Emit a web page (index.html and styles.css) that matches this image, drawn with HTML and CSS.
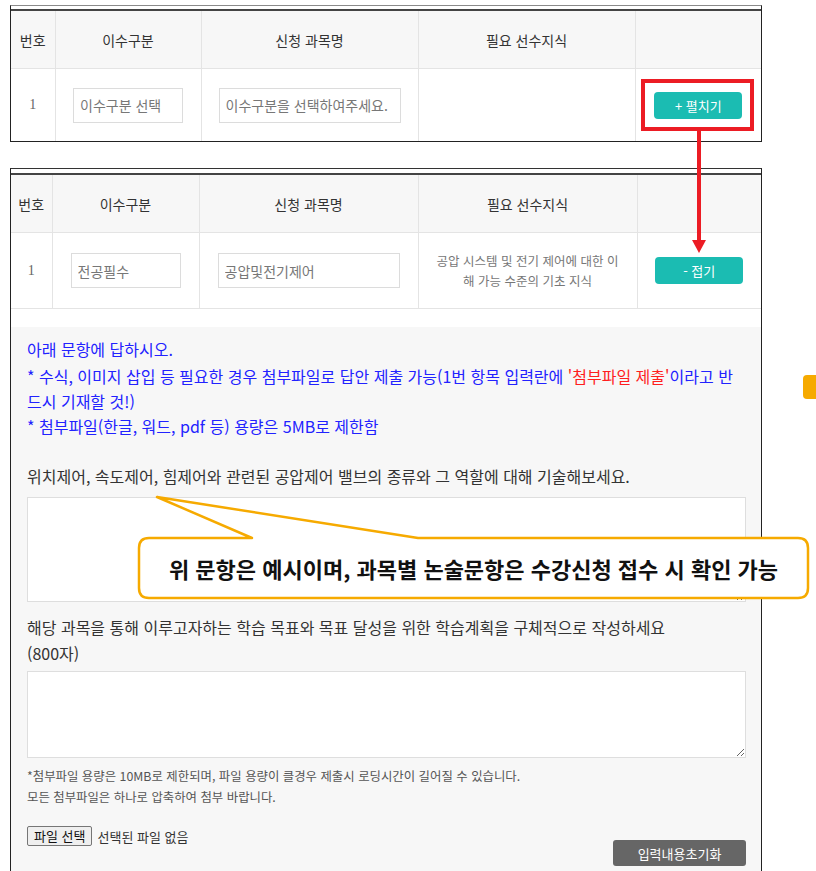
FILE: index.html
```html
<!DOCTYPE html>
<html lang="ko">
<head>
    <meta charset="UTF-8">
    <meta name="viewport" content="width=device-width, initial-scale=1.0">
    <title>수강신청 - 논술문항</title>
    <link rel="stylesheet" href="styles.css">
</head>
<body>

    <div class="page">

        <!-- 접힌 상태 -->
        <div class="shot">
            <table class="course-table">
                <colgroup>
                    <col style="width:44px"><col style="width:146px"><col style="width:217px"><col style="width:217px"><col>
                </colgroup>
                <thead>
                    <tr><th>번호</th><th>이수구분</th><th>신청 과목명</th><th>필요 선수지식</th><th></th></tr>
                </thead>
                <tbody>
                    <tr>
                        <td class="num">1</td>
                        <td><input type="text" class="field field-type" value="이수구분 선택" readonly></td>
                        <td><input type="text" class="field field-name" value="이수구분을 선택하여주세요." readonly></td>
                        <td></td>
                        <td><button class="btn-toggle">+ 펼치기</button></td>
                    </tr>
                </tbody>
            </table>
        </div>

        <!-- 펼친 상태 -->
        <div class="shot shot-open">
            <table class="course-table">
                <colgroup>
                    <col style="width:41px"><col style="width:147px"><col style="width:219px"><col style="width:219px"><col>
                </colgroup>
                <thead>
                    <tr><th>번호</th><th>이수구분</th><th>신청 과목명</th><th>필요 선수지식</th><th></th></tr>
                </thead>
                <tbody>
                    <tr class="row-open">
                        <td class="num">1</td>
                        <td><input type="text" class="field field-type" value="전공필수" readonly></td>
                        <td><input type="text" class="field field-name" value="공압및전기제어" readonly></td>
                        <td class="need">공압 시스템 및 전기 제어에 대한 이해 가능 수준의 기초 지식</td>
                        <td><button class="btn-toggle">- 접기</button></td>
                    </tr>
                </tbody>
            </table>

            <div class="essay">
                <div class="notice">
                    <p class="notice-title">아래 문항에 답하시오.</p>
                    <p>* 수식, 이미지 삽입 등 필요한 경우 첨부파일로 답안 제출 가능(1번 항목 입력란에 <span class="red">'첨부파일 제출'</span>이라고 반드시 기재할 것!)</p>
                    <p>* 첨부파일(한글, 워드, pdf 등) 용량은 5MB로 제한함</p>
                </div>

                <p class="question q1">위치제어, 속도제어, 힘제어와 관련된 공압제어 밸브의 종류와 그 역할에 대해 기술해보세요.</p>
                <textarea class="answer answer-1"></textarea>

                <p class="question q2">해당 과목을 통해 이루고자하는 학습 목표와 목표 달성을 위한 학습계획을 구체적으로 작성하세요<br>(800자)</p>
                <textarea class="answer answer-2"></textarea>

                <p class="file-note">*첨부파일 용량은 10MB로 제한되며, 파일 용량이 클경우 제출시 로딩시간이 길어질 수 있습니다.<br>모든 첨부파일은 하나로 압축하여 첨부 바랍니다.</p>

                <div class="file-row">
                    <div class="file-pick">
                        <button class="btn-file">파일 선택</button>
                        <span>선택된 파일 없음</span>
                    </div>
                    <button class="btn-reset">입력내용초기화</button>
                </div>
            </div>
        </div>
    </div>

    <!-- 설명용 표시 -->
    <div class="mark-box"></div>
    <svg class="mark-arrow" width="18" height="124" viewBox="0 0 18 124">
        <line x1="9" y1="0" x2="9" y2="112" stroke="#ec1c24" stroke-width="4"/>
        <polygon points="2,110 16,110 9,123" fill="#ec1c24"/>
    </svg>

    <div class="callout">
        <svg width="686" height="115" viewBox="0 0 686 115">
            <path d="M19 48 L122 48 L27 7 L288 48 L668 48 Q678 48 678 58 L678 98 Q678 108 668 108 L19 108 Q9 108 9 98 L9 58 Q9 48 19 48 Z"
                  fill="#fff" stroke="#f6aa00" stroke-width="2.5" stroke-linejoin="round"/>
        </svg>
        <div class="callout-text">위 문항은 예시이며, 과목별 논술문항은 수강신청 접수 시 확인 가능</div>
    </div>

    <div class="tab-edge"></div>

</body>
</html>
```

FILE: styles.css
```css
body {
    margin: 0;
    background-color: #fff;
    font-family: "Noto Sans CJK KR", "Noto Sans", sans-serif;
    color: #333;
}

.page {
    width: 752px;
    padding: 5px 0 0 10px;
}

/* 캡처 틀 */
.shot {
    border: 1px solid #222;
    border-top-color: #8a8a8a;
    padding-top: 3px;
    background-color: #fff;
}

.shot-open {
    margin-top: 26px;
    border-top-color: #333;
    border-bottom: none;
    padding-top: 4px;
}

/* 과목 표 */
.course-table {
    width: 100%;
    border-collapse: collapse;
    table-layout: fixed;
    border-top: 2px solid #444;
}

.course-table th {
    height: 57px;
    background-color: #f7f7f7;
    font-size: 14px;
    font-weight: normal;
    color: #333;
    border-right: 1px solid #e4e4e4;
    border-bottom: 1px solid #e4e4e4;
    padding: 0;
}

.course-table td {
    height: 72px;
    text-align: center;
    border-right: 1px solid #e4e4e4;
    padding: 0;
}

.course-table th:last-child,
.course-table td:last-child {
    border-right: none;
}

.row-open td {
    height: 75px;
    border-bottom: 1px solid #e4e4e4;
}

.course-table .num {
    font-family: "Liberation Serif", serif;
    font-size: 14px;
    color: #666;
}

.field {
    height: 35px;
    box-sizing: border-box;
    border: 1px solid #dcdcdc;
    background-color: #fff;
    padding: 0 6px;
    font-family: inherit;
    font-size: 14px;
    color: #777;
    outline: none;
}

.field-type {
    width: 110px;
}

.field-name {
    width: 182px;
}

.need {
    padding: 0 17px !important;
    font-size: 12.5px;
    line-height: 20px;
    color: #777;
}

.btn-toggle {
    width: 88px;
    height: 27px;
    border: none;
    border-radius: 4px;
    background-color: #1bbcb2;
    color: #fff;
    font-family: inherit;
    font-size: 13px;
    cursor: pointer;
}

/* 논술 입력 영역 */
.essay {
    margin-top: 18px;
    background-color: #f7f7f7;
    padding: 10px 15px 20px 16px;
}

.essay p {
    margin: 0;
}

.notice {
    font-size: 16px;
    line-height: 25px;
    color: #2222ff;
}

.notice-title {
    margin-bottom: 2px !important;
}

.red {
    color: #ff1e1e;
}

.question {
    font-size: 16px;
    color: #333;
}

.q1 {
    margin-top: 25px !important;
    line-height: 25px;
}

.q2 {
    margin-top: 12px !important;
    line-height: 26px;
}

.answer {
    display: block;
    width: 100%;
    box-sizing: border-box;
    border: 1px solid #dedede;
    background-color: #fff;
    font-family: inherit;
    font-size: 13px;
    margin: 0;
}

.answer-1 {
    height: 105px;
    margin-top: 8px;
}

.answer-2 {
    height: 87px;
    margin-top: 5px;
}

.file-note {
    margin-top: 8px !important;
    font-size: 12.4px;
    line-height: 21px;
    color: #555;
}

.file-row {
    display: flex;
    justify-content: space-between;
    align-items: flex-start;
    margin-top: 18px;
}

.file-pick {
    display: flex;
    align-items: center;
    gap: 5px;
    font-size: 13px;
    color: #333;
}

.btn-file {
    height: 20px;
    padding: 0 6px;
    border: 1px solid #767676;
    border-radius: 2px;
    background-color: #efefef;
    font-family: inherit;
    font-size: 13px;
    color: #111;
    line-height: 16px;
}

.btn-reset {
    width: 133px;
    height: 26px;
    margin-top: 14px;
    border: none;
    border-radius: 3px;
    background-color: #666;
    color: #fff;
    font-family: inherit;
    font-size: 13px;
}

/* 설명용 표시 (겹쳐 그림) */
.mark-box {
    position: absolute;
    left: 641px;
    top: 79px;
    width: 113px;
    height: 52px;
    box-sizing: border-box;
    border: 4px solid #ec1c24;
}

.mark-arrow {
    position: absolute;
    left: 690px;
    top: 130px;
}

.callout {
    position: absolute;
    left: 130px;
    top: 490px;
    width: 686px;
    height: 115px;
}

.callout svg {
    display: block;
}

.callout-text {
    position: absolute;
    left: 9px;
    top: 48px;
    width: 669px;
    height: 60px;
    display: flex;
    align-items: center;
    justify-content: center;
    font-size: 22px;
    font-weight: bold;
    color: #111;
}

.tab-edge {
    position: absolute;
    left: 803px;
    top: 375px;
    width: 20px;
    height: 24px;
    border-radius: 4px;
    background-color: #f6aa00;
}

html, body {
    overflow: hidden;
}
```
